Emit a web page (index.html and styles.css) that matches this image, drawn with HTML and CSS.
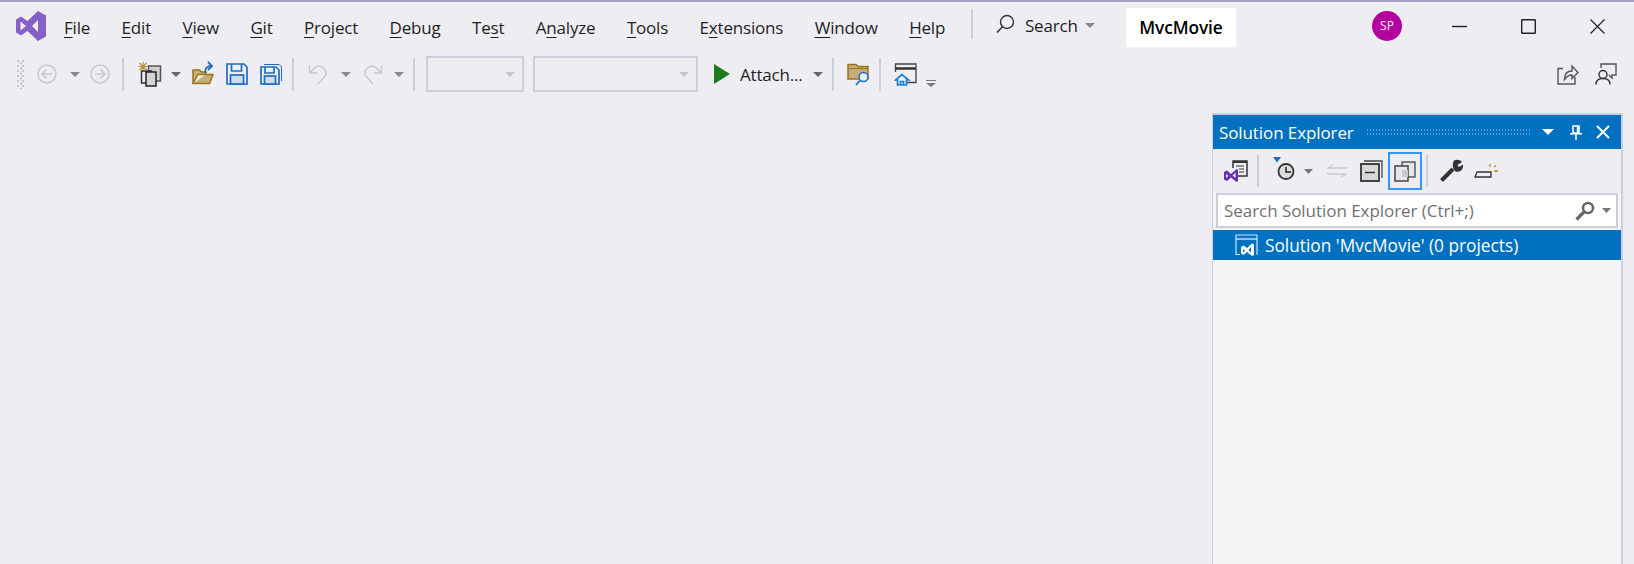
FILE: index.html
```html
<!DOCTYPE html>
<html lang="en">
<head>
<meta charset="utf-8">
<title>MvcMovie - Visual Studio</title>
<link rel="stylesheet" href="styles.css">
</head>
<body>
<div class="app">
  <header class="titlebar">
    <svg class="logo" width="30" height="30" viewBox="0 0 30 30"><path fill="#8661c5" fill-rule="evenodd" d="M22 0 30 4.500V25.500L22 30 11.500 20 5 24.500 0 21.500V8.500L5 5.500 11.500 10ZM4.500 10.500V19.500L10 15ZM22 9 16 15 22 21Z"/></svg>
    <nav class="menu">
      <span><u>F</u>ile</span>
      <span><u>E</u>dit</span>
      <span><u>V</u>iew</span>
      <span><u>G</u>it</span>
      <span><u>P</u>roject</span>
      <span><u>D</u>ebug</span>
      <span>Te<u>s</u>t</span>
      <span>A<u>n</u>alyze</span>
      <span><u>T</u>ools</span>
      <span>E<u>x</u>tensions</span>
      <span><u>W</u>indow</span>
      <span><u>H</u>elp</span>
    </nav>
    <i class="vsep title-sep"></i>
    <div class="search">
      <svg width="20" height="22" viewBox="0 0 20 22" fill="none" stroke="#333"><circle cx="11" cy="8" r="6.500" stroke-width="1.400"/><path stroke-width="1.600" d="M6.500 12.800 1 18.500"/></svg>
      <span class="search-label">Search</span>
      <svg class="caret-svg" width="10" height="5" viewBox="0 0 10 5"><path fill="#888" d="M0 0h10L5 5z"/></svg>
    </div>
    <div class="solution-name">MvcMovie</div>
    <div class="avatar">SP</div>
    <div class="winctl">
      <svg width="15" height="15" viewBox="0 0 15 15" stroke="#222" stroke-width="1.400" fill="none"><path d="M0 7.500h15"/></svg>
      <svg width="15" height="15" viewBox="0 0 15 15" stroke="#222" stroke-width="1.400" fill="none"><rect x=".7" y=".7" width="13.600" height="13.600" rx=".5"/></svg>
      <svg width="15" height="15" viewBox="0 0 15 15" stroke="#222" stroke-width="1.200" fill="none"><path d="M.5.5l14 14M14.500.5l-14 14"/></svg>
    </div>
  </header>

  <div class="toolbar">
    <svg class="grip" width="8" height="29" viewBox="0 0 8 29"><defs><pattern id="gripdots" width="5" height="5" patternUnits="userSpaceOnUse"><rect width="2" height="2" fill="#c4c4cc"/><rect x="3" y="2.500" width="2" height="2" fill="#c4c4cc"/></pattern></defs><rect width="8" height="29" fill="url(#gripdots)"/></svg>
    <svg class="back" width="20" height="20" viewBox="0 0 20 20" fill="none" stroke="#c9c9cd" stroke-width="1.500"><circle cx="10" cy="10" r="9"/><path d="M15 10H5.500M9.500 5.500 5 10l4.500 4.500"/></svg>
    <svg class="caret back-caret" width="10" height="5" viewBox="0 0 10 5"><path fill="#8a8a8e" d="M0 0h10L5 5z"/></svg>
    <svg class="fwd" width="20" height="20" viewBox="0 0 20 20" fill="none" stroke="#c9c9cd" stroke-width="1.500"><circle cx="10" cy="10" r="9"/><path d="M5 10h9.500M10.500 5.500 15 10l-4.500 4.500"/></svg>
    <i class="vsep sep-a"></i>
    <svg class="newproj" width="24" height="25" viewBox="0 0 24 25" fill="none"><path stroke="#b8923a" stroke-width="1.200" d="M5 0v9M.500 4.500h9M1.500 1l7 7M8.500 1l-7 7"/><rect x="10.500" y="4" width="12" height="15" fill="#d0d0d2" stroke="#555" stroke-width="1.500"/><rect x="3.500" y="9" width="10" height="12" fill="#eeeef2" stroke="#333" stroke-width="1.500"/><rect x="8" y="10" width="10" height="14" fill="#d4d4d6" stroke="#222" stroke-width="1.500"/></svg>
    <svg class="caret new-caret" width="10" height="5" viewBox="0 0 10 5"><path fill="#666" d="M0 0h10L5 5z"/></svg>
    <svg class="openf" width="22" height="24" viewBox="0 0 22 24" fill="none"><path fill="#c7ad78" stroke="#9a7517" stroke-width="1.500" d="M1 22.500V9h6.500l2 2H14v2.500H6L1 22.500h16.500l3.500-9H14"/><path stroke="#1b6ec2" stroke-width="1.800" d="M13 12c0-5 2-7 6.500-7M16 1l4 4-4 4"/></svg>
    <svg class="save" width="22" height="22" viewBox="0 0 22 22" fill="none" stroke="#1b6ec2" stroke-width="1.700"><path d="M1 1h17l3 3v17H1z"/><path d="M5.500 1v7h10V1"/><rect x="4.500" y="12" width="13" height="9" fill="#cfdcec"/></svg>
    <svg class="saveall" width="22" height="22" viewBox="0 0 22 22" fill="none" stroke="#1b6ec2" stroke-width="1.700"><path stroke-width="1" d="M4 1.500h14c2 0 3.500 1.500 3.500 3.500v13"/><path d="M1 4h15l3 3v14H1z"/><path d="M5 4v6h9V4"/><rect x="4.500" y="13" width="11" height="8" fill="#cfdcec"/></svg>
    <i class="vsep sep-b"></i>
    <svg class="undo" width="20" height="22" viewBox="0 0 20 22" fill="none" stroke="#c9c9cd" stroke-width="1.500"><path d="M1.500 2v8h8M1.500 10 7 4.500c2-1.500 5-1.500 8 0 4 3 4 7 1 10l-6 6.500"/></svg>
    <svg class="caret undo-caret" width="10" height="5" viewBox="0 0 10 5"><path fill="#8a8a8e" d="M0 0h10L5 5z"/></svg>
    <svg class="redo" width="20" height="22" viewBox="0 0 20 22" fill="none" stroke="#c9c9cd" stroke-width="1.500"><path d="M18.500 2v8h-8M18.500 10 13 4.500c-2-1.500-5-1.500-8 0-4 3-4 7-1 10l6 6.500"/></svg>
    <svg class="caret redo-caret" width="10" height="5" viewBox="0 0 10 5"><path fill="#8a8a8e" d="M0 0h10L5 5z"/></svg>
    <i class="vsep sep-c"></i>
    <div class="combo combo-a"><svg width="10" height="5" viewBox="0 0 10 5"><path fill="#c4c6d2" d="M0 0h10L5 5z"/></svg></div>
    <div class="combo combo-b"><svg width="10" height="5" viewBox="0 0 10 5"><path fill="#c4c6d2" d="M0 0h10L5 5z"/></svg></div>
    <svg class="play" width="16" height="20" viewBox="0 0 16 20"><path fill="#1e7b1e" d="M0 0 16 10 0 20z"/></svg>
    <span class="attach">Attach...</span>
    <svg class="caret attach-caret" width="10" height="5" viewBox="0 0 10 5"><path fill="#666" d="M0 0h10L5 5z"/></svg>
    <i class="vsep sep-d"></i>
    <svg class="findf" width="24" height="23" viewBox="0 0 24 23" fill="none"><path fill="#c8ad7c" stroke="#9a7517" stroke-width="1.500" d="M1 1.500h8l2 2h10V16H1z"/><path stroke="#9a7517" d="M1 5.500h20"/><circle cx="16.500" cy="14" r="4.500" fill="#eeeef2" stroke="#1b6ec2" stroke-width="1.500"/><path stroke="#1b6ec2" stroke-width="1.800" d="M13 17.500 9 22"/></svg>
    <i class="vsep sep-e"></i>
    <svg class="startw" width="24" height="23" viewBox="0 0 24 23" fill="none"><path stroke="#444" stroke-width="1.300" d="M13 19.500h9V1H1.500v8"/><path stroke="#333" stroke-width="2.500" d="M1 5.500h21"/><path fill="#eeeef2" stroke="#1b7fd4" stroke-width="1.700" d="M8 11.500 1.500 17h2v5h9v-5h2zM6.500 22v-3.500h3V22"/></svg>
    <svg class="more" width="10" height="7" viewBox="0 0 10 7"><path fill="#777" d="M0 0h10v1H0zM0 3h10L5 7z"/></svg>
    <svg class="share" width="22" height="21" viewBox="0 0 22 21" fill="none" stroke="#555" stroke-width="1.400"><path d="M6 4.500H1v15.500h17v-7"/><path d="M7.500 15.500c0-6 3-8.500 7.500-8.500V2l6 6.500-6 6V11c-3 0-5.500 1.500-7.500 4.500z"/></svg>
    <svg class="feedback" width="22" height="22" viewBox="0 0 22 22" fill="none" stroke="#555" stroke-width="1.400"><path d="M6 5V1h15v11h-4v3l-3-3"/><circle cx="8" cy="11.500" r="4" fill="#eeeef2" stroke="#333"/><path stroke="#333" d="M1 21.500c0-4 3-6 7-6s7 2 7 6"/></svg>
  </div>

  <main class="workspace">
    <aside class="panel">
      <div class="panel-title">
        <span class="panel-name">Solution Explorer</span>
        <span class="panel-dots"></span>
        <svg class="panel-caret" width="12" height="6" viewBox="0 0 12 6"><path fill="#fff" d="M0 0h12L6 6z"/></svg>
        <svg class="panel-pin" width="12" height="15" viewBox="0 0 12 15" fill="none" stroke="#fff" stroke-width="1.500"><path d="M3 1h6v7H3zM7.500 1v7M0 8.800h12M6 9v6"/></svg>
        <svg class="panel-close" width="14" height="14" viewBox="0 0 14 14" fill="none" stroke="#fff" stroke-width="2"><path d="M1 1l12 12M13 1 1 13"/></svg>
      </div>
      <div class="panel-tools">
        <svg class="t-vs" width="24" height="23" viewBox="0 0 24 23" fill="none"><path fill="#eeeef2" stroke="#333" stroke-width="1.500" d="M9 8V1h14v15H14"/><path stroke="#333" stroke-width="2" d="M9 2h14"/><path stroke="#333" d="M12 6h8M15 9h5M15 12h5"/><path fill="#6a2fb0" fill-rule="evenodd" d="M0 12l3-1.500L7 14l5.500-5 1.500 1v11L12.500 22 7 17.500 3 21 0 19.500ZM2 14v4l2.500-2ZM11.500 12.500 8.500 15.500 11.500 18Z"/></svg>
        <i class="vsep sep-p1"></i>
        <svg class="t-hist" width="22" height="25" viewBox="0 0 22 25" fill="none"><path fill="#1b6ec2" d="M0 0h8L4 5.500z"/><circle cx="13" cy="14.500" r="7.500" fill="#dcdcdc" stroke="#333" stroke-width="1.800"/><path stroke="#222" stroke-width="1.500" d="M13 10v5h5"/></svg>
        <svg class="t-caret" width="9" height="5" viewBox="0 0 9 5"><path fill="#777" d="M0 0h9L4.500 5z"/></svg>
        <svg class="t-sync" width="20" height="14" viewBox="0 0 20 14" fill="none" stroke="#c9c9cd" stroke-width="1.300"><path d="M20 4H1l5-3.500M0 10h19l-5 3.500"/></svg>
        <svg class="t-coll" width="23" height="22" viewBox="0 0 23 22" fill="none"><path stroke="#444" stroke-width="1.300" d="M4 1h18v17"/><rect x="1" y="4" width="18" height="17" fill="#d8d8d8" stroke="#333" stroke-width="1.800"/><path stroke="#333" stroke-width="1.500" d="M5 12.500h10"/></svg>
        <div class="t-active"><svg width="22" height="21" viewBox="0 0 22 21" fill="none"><rect x="8" y="1" width="13" height="15" fill="#e6e6ea" stroke="#444" stroke-width="1.300"/><rect x="1" y="5" width="13" height="15" fill="#e6e6ea" stroke="#444" stroke-width="1.500"/><rect x="8" y="9" width="6" height="7" fill="#c8c8cc"/></svg></div>
        <i class="vsep sep-p2"></i>
        <svg class="t-wrench" width="24" height="24" viewBox="0 0 24 24" fill="none"><path stroke="#333" stroke-width="4" d="M2.500 21.500 14 10"/><path fill="#333" d="M15 1.500c3-1.500 6.500-.5 8 1.500l-4.500 3 1.500 2 4-2.500c1 4.500-3 8.500-7.500 7-3-2-3.500-8-1.500-11z"/></svg>
        <svg class="t-preview" width="24" height="14" viewBox="0 0 24 14" fill="none"><path stroke="#333" stroke-width="1.300" d="M1 13h16V8H3z"/><path stroke="#b48a1e" stroke-width="1.300" d="M16 0v3M20 3l2-1.500M20 7h4"/></svg>
      </div>
      <div class="panel-search">
        <span class="panel-search-text">Search Solution Explorer (Ctrl+;)</span>
        <svg class="ps-glass" width="20" height="20" viewBox="0 0 20 20" fill="none" stroke="#666" stroke-width="2.500"><circle cx="13" cy="7" r="5"/><path stroke-width="3.200" d="M9 11 1.500 18.500"/></svg>
        <svg class="ps-caret" width="9" height="5" viewBox="0 0 9 5"><path fill="#777" d="M0 0h9L4.500 5z"/></svg>
      </div>
      <div class="tree-row">
        <svg width="24" height="22" viewBox="0 0 24 22" fill="none"><path stroke="#cfe3f3" stroke-width="1.200" d="M5 20.500H1V1h21v19h-1"/><path stroke="#cfe3f3" stroke-width="1.400" d="M1 5h21"/><path fill="#fff" fill-rule="evenodd" d="M6 13l2.500-1.500L12 14l5-4.500 2 1V21l-2 1-5-4-3.500 3L6 19.500ZM8 15v3.500l2-1.700ZM16 13l-2.500 3 2.500 2.500Z"/></svg>
        <span class="tree-label">Solution 'MvcMovie' (0 projects)</span>
      </div>
    </aside>
  </main>
</div>
</body>
</html>
```

FILE: styles.css
```css
* { box-sizing: border-box; }

html, body {
  margin: 0;
  height: 100%;
  overflow: hidden;
}

body {
  background: #eeeef2;
  color: #1e1e1e;
  font-family: "Open Sans", "Noto Sans", sans-serif;
}

svg { display: block; flex: none; }
i { display: block; flex: none; }

.app {
  height: 100vh;
  display: flex;
  flex-direction: column;
  border-top: 2px solid #a0a0c0;
}

.titlebar {
  height: 48px;
  flex: none;
  display: flex;
  align-items: flex-start;
  padding-left: 16px;
}

.logo { margin-top: 9px; }

.menu {
  display: flex;
  gap: 31.500px;
  margin-left: 18px;
  margin-top: 14px;
  font-size: 17px;
  line-height: 24px;
  letter-spacing: -.2px;
  width: 906px;
}

.menu u { text-underline-offset: 3px; text-decoration-thickness: 1px; }

.vsep {
  width: 2px;
  background: #cccedb;
}

.title-sep { height: 30px; margin-top: 7px; margin-left: 1px; }

.search {
  display: flex;
  align-items: center;
  height: 24px;
  margin-top: 11px;
  margin-left: 23px;
  width: 130px;
}

.search-label { font-size: 17px; letter-spacing: -.2px; margin-left: 9px; }
.caret-svg { margin-left: 7px; }

.solution-name {
  width: 110px;
  height: 39px;
  margin-top: 6px;
  background: #fff;
  color: #000;
  font-weight: 600;
  font-size: 17.300px;
  letter-spacing: -.1px;
  text-align: center;
  line-height: 39px;
}

.avatar {
  width: 30px;
  height: 30px;
  margin-top: 9px;
  margin-left: 136px;
  border-radius: 50%;
  background: #b4009e;
  color: #fff;
  font-size: 12px;
  text-align: center;
  line-height: 30px;
}

.winctl {
  display: flex;
  gap: 54px;
  margin-left: 50px;
  margin-top: 17px;
  align-items: center;
}

.toolbar {
  height: 48px;
  flex: none;
  display: flex;
  align-items: center;
  padding-left: 17px;
  padding-right: 17px;
}

.toolbar > .vsep { height: 33px; }

.back { margin-left: 12px; }
.back-caret { margin-left: 13px; }
.fwd { margin-left: 10px; }
.sep-a { margin-left: 12px; }
.newproj { margin-left: 14px; }
.new-caret { margin-left: 9px; }
.openf { margin-left: 11px; margin-top: -3px; }
.save { margin-left: 12px; }
.saveall { margin-left: 12px; }
.sep-b { margin-left: 10px; }
.undo { margin-left: 14px; }
.undo-caret { margin-left: 13px; }
.redo { margin-left: 12px; }
.redo-caret { margin-left: 11px; }
.sep-c { margin-left: 9px; }
.combo {
  height: 36px;
  border: 2px solid #cccedb;
  display: flex;
  align-items: center;
  justify-content: flex-end;
  padding-right: 7px;
}
.combo-a { width: 98px; margin-left: 11px; }
.combo-b { width: 165px; margin-left: 9px; }
.play { margin-left: 16px; }
.attach { margin-left: 10px; font-size: 17px; letter-spacing: -.2px; width: 64px; white-space: nowrap; }
.attach-caret { margin-left: 9px; }
.sep-d { margin-left: 9px; }
.findf { margin-left: 13px; }
.sep-e { margin-left: 8px; }
.startw { margin-left: 13px; }
.more { margin-left: 8px; margin-top: 18px; }
.share { margin-left: auto; }
.feedback { margin-left: 16px; }

.workspace {
  flex: 1;
  min-height: 0;
  display: flex;
  justify-content: flex-end;
  padding-top: 15px;
  padding-right: 11px;
}

.panel {
  width: 411px;
  height: 100%;
  background: #f5f5f5;
  border: 2px solid #cccedb;
  border-left-width: 1px;
  border-bottom: 0;
  display: flex;
  flex-direction: column;
}

.panel-title {
  height: 34px;
  flex: none;
  background: #0070c0;
  color: #fff;
  display: flex;
  align-items: center;
  padding-left: 6px;
}

.panel-name { font-size: 17px; width: 147px; white-space: nowrap; letter-spacing: -.1px; }

.panel-dots {
  width: 166px;
  height: 8px;
  background-image: radial-gradient(circle, #5aa5de 0.8px, transparent 1px);
  background-size: 3px 4px;
}

.panel-caret { margin-left: 10px; }
.panel-pin { margin-left: 16px; }
.panel-close { margin-left: 14px; }

.panel-tools {
  height: 44px;
  flex: none;
  background: #eeeef2;
  display: flex;
  align-items: center;
  padding-left: 11px;
}

.panel-tools > .vsep { height: 32px; }

.sep-p1 { margin-left: 9px; }
.t-hist { margin-left: 14px; margin-top: -3px; }
.t-caret { margin-left: 9px; }
.t-sync { margin-left: 14px; }
.t-coll { margin-left: 13px; }
.t-active {
  width: 34px;
  height: 38px;
  margin-left: 5px;
  border: 2px solid #3399ff;
  display: flex;
  align-items: center;
  justify-content: center;
}
.sep-p2 { margin-left: 4px; }
.t-wrench { margin-left: 11px; }
.t-preview { margin-left: 11px; }

.panel-search {
  height: 35px;
  flex: none;
  margin: 0 3px 0 3px;
  background: #fff;
  border: 2px solid #cccedb;
  display: flex;
  align-items: center;
  padding-left: 6px;
}

.panel-search-text {
  font-size: 17px;
  letter-spacing: -.05px;
  color: #717171;
  width: 351px;
  white-space: nowrap;
}

.ps-caret { margin-left: 7px; }

.tree-row {
  height: 30px;
  flex: none;
  margin-top: 2px;
  background: #0070c0;
  color: #fff;
  display: flex;
  align-items: center;
  padding-left: 22px;
  font-size: 17.300px;
  gap: 6px;
}

.tree-label { padding-top: 1px; }
```
